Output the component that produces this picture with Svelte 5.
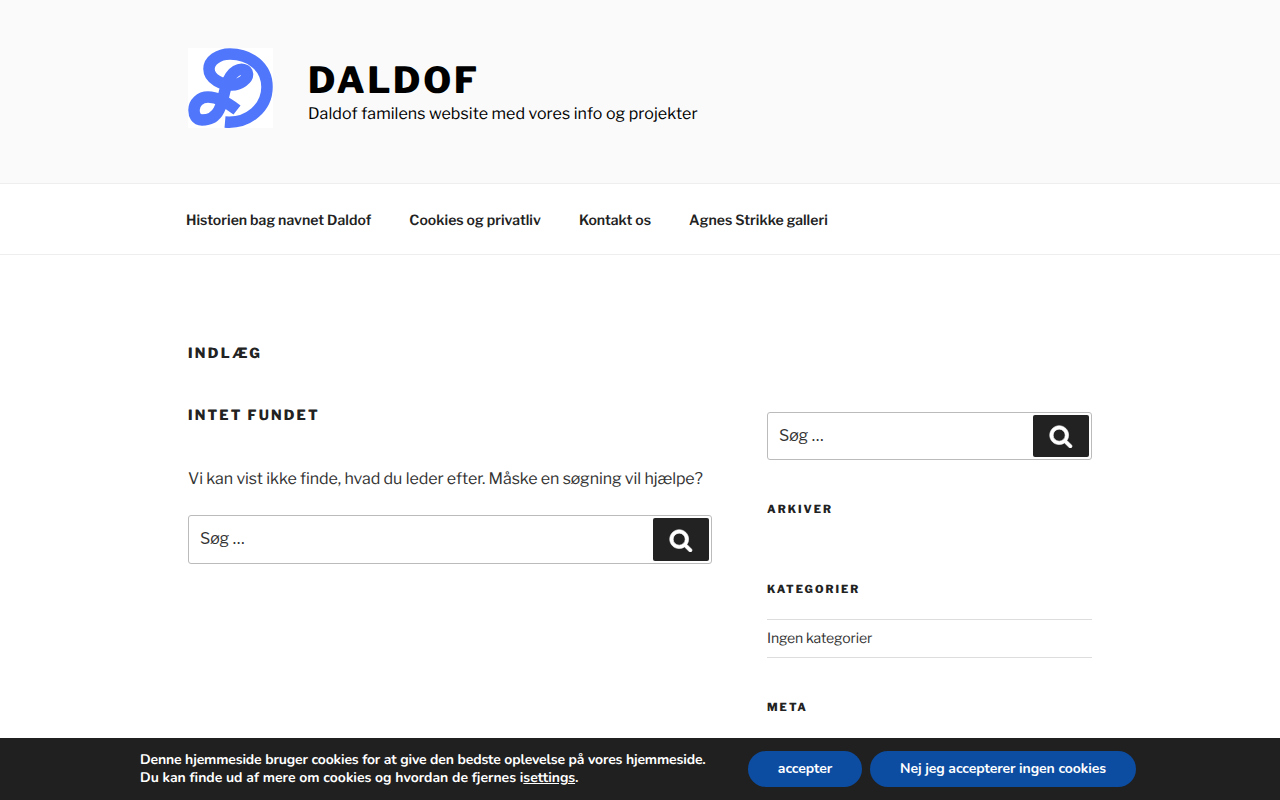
<script>
  const nav = ['Historien bag navnet Daldof', 'Cookies og privatliv', 'Kontakt os', 'Agnes Strikke galleri'];
</script>

{#snippet search()}
  <form class="search" onsubmit={(e) => e.preventDefault()}>
    <input type="search" placeholder="Søg …" />
    <button type="submit" aria-label="Søg">
      <svg viewBox="0 0 30 32" width="24" height="24" fill="#fff" stroke="#fff" stroke-width="0.8">
        <path d="M20.571 14.857q0-3.304-2.348-5.652t-5.652-2.348-5.652 2.348-2.348 5.652 2.348 5.652 5.652 2.348 5.652-2.348 2.348-5.652zM29.714 29.714q0 0.929-0.679 1.607t-1.607 0.679q-0.964 0-1.607-0.679l-6.125-6.107q-3.196 2.214-7.125 2.214-2.554 0-4.884-0.991t-4.018-2.679-2.679-4.018-0.991-4.884 0.991-4.884 2.679-4.018 4.018-2.679 4.884-0.991 4.884 0.991 4.018 2.679 2.679 4.018 0.991 4.884q0 3.929-2.214 7.125l6.125 6.125q0.661 0.661 0.661 1.607z" />
      </svg>
    </button>
  </form>
{/snippet}

<div class="page">
  <header class="masthead">
    <div class="wrap brand">
      <div class="logo">
        <svg viewBox="0 0 85 80" width="85" height="80" fill="none">
          <path d="M37 74 C61 76 79 59 79 39 C79 19 62 6 42 6 C30 6 21 13 21 21 C21 31 34 37 44 37 C52 37 60 31 59.5 26 C59 21 53 20 48 23 C43 26 40.5 31 38.5 37 C36 44 35 54 31 62 C27 70 20 72 14 72 C8 72 6 67 6 62 C6 55 12 49 20 49 C30 49 40 55 49 62" stroke="#5077fb" stroke-width="11.5" />
        </svg>
      </div>
      <div class="titles">
        <h1>DALDOF</h1>
        <p>Daldof familens website med vores info og projekter</p>
      </div>
    </div>
  </header>

  <nav class="mainnav">
    <ul class="wrap">
      {#each nav as item}
        <li><a href="#top">{item}</a></li>
      {/each}
    </ul>
  </nav>

  <main class="wrap content">
    <h2 class="page-title">INDLÆG</h2>
    <div class="columns">
      <section class="primary">
        <h3>INTET FUNDET</h3>
        <p>Vi kan vist ikke finde, hvad du leder efter. Måske en søgning vil hjælpe?</p>
        {@render search()}
      </section>
      <aside class="sidebar">
        {@render search()}
        <h4 class="first">ARKIVER</h4>
        <h4 class="cat">KATEGORIER</h4>
        <ul><li>Ingen kategorier</li></ul>
        <h4 class="meta">META</h4>
      </aside>
    </div>
  </main>

  <div class="cookie">
    <div class="msg"><span class="line1">Denne hjemmeside bruger cookies for at give den bedste oplevelse på vores hjemmeside.</span><br /><span class="line2">Du kan finde ud af mere om cookies og hvordan de fjernes i<a href="#top">settings</a>.</span></div>
    <div class="actions">
      <button class="accept">accepter</button>
      <button class="reject">Nej jeg accepterer ingen cookies</button>
    </div>
  </div>
</div>

<style>
  :global(body) { margin: 0; background: #fff; }
  .page {
    height: 800px;
    overflow: hidden;
    position: relative;
    font-family: "Libre Franklin", "Inter", "Liberation Sans", sans-serif;
    color: #222;
    text-rendering: geometricPrecision;
  }
  .wrap { width: 904px; margin: 0 auto; box-sizing: border-box; }
  .masthead { height: 184px; box-sizing: border-box; background: #fafafa; border-bottom: 1px solid #eee; }
  .brand { display: flex; padding-top: 48px; }
  .logo { width: 85px; height: 80px; background: #fff; }
  .logo svg { display: block; }
  .titles { margin-left: 35px; }
  h1 { margin: 10px 0 0; font-size: 36px; line-height: 44px; font-weight: 800; letter-spacing: 2.75px; color: #000; }
  .titles p { margin: 0; font-size: 16px; line-height: 24px; color: #000; letter-spacing: 0.06px; }
  .mainnav { height: 71px; box-sizing: border-box; border-bottom: 1px solid #eee; }
  .mainnav ul { display: flex; list-style: none; margin: 0 auto; padding: 0; gap: 38px; position: relative; left: -2px; }
  .mainnav a { display: block; padding-top: 1px; line-height: 71px; height: 70px; font-size: 14px; font-weight: 600; color: #222; text-decoration: none; letter-spacing: 0.02px; }
  .page-title { margin: 90px 0 0; font-size: 14px; line-height: 18px; font-weight: 800; letter-spacing: 2.3px; }
  .columns { display: flex; justify-content: space-between; margin-top: 44px; }
  .primary { width: 524px; }
  h3 { margin: 0; font-size: 14px; line-height: 18px; font-weight: 800; letter-spacing: 2.15px; }
  .primary p { margin: 42px 0 0; font-size: 16px; line-height: 24px; color: #333; letter-spacing: -0.07px; }
  .primary .search { margin-top: 24px; }
  .sidebar { width: 325px; padding-top: 5px; }
  .search { display: flex; align-items: center; justify-content: space-between; height: 49px; box-sizing: border-box; border: 1px solid #bbb; border-radius: 3px; padding: 2px; background: #fff; }
  .sidebar .search { height: 48px; }
  .search input { flex: 1; min-width: 0; border: 0; outline: 0; background: none; padding: 0 0 2px 9px; font: inherit; font-size: 16px; color: #333; }
  .search input::placeholder { color: #333; opacity: 1; }
  .search button { width: 56px; height: 43px; border: 0; border-radius: 2px; background: #222; display: flex; align-items: center; justify-content: center; padding: 0; }
  .sidebar .search button { height: 42px; }
  h4 { margin: 0; font-size: 11px; line-height: 14px; font-weight: 800; letter-spacing: 2px; color: #222; }
  h4.first { margin-top: 42px; }
  h4.cat { margin-top: 66px; }
  h4.meta { margin-top: 42px; }
  .sidebar ul { list-style: none; margin: 23px 0 0; padding: 0; border-top: 1px solid #ddd; }
  .sidebar li { font-size: 14px; line-height: 37px; border-bottom: 1px solid #ddd; color: #333; letter-spacing: -0.12px; }
  .cookie { position: absolute; left: 0; right: 0; bottom: 0; height: 62px; background: #202020; color: #fff; display: flex; align-items: center; padding-left: 140px; font-family: "Nunito", "Lato", "Noto Sans", sans-serif; font-weight: 700; font-size: 14px; line-height: 18px; }
  .msg { width: 608px; }
  .line1 { letter-spacing: -0.15px; }
  .line2 { letter-spacing: -0.02px; }
  .msg a { color: #fff; text-decoration: underline; }
  .actions { display: flex; gap: 8px; }
  .actions button { height: 36px; border: 0; border-radius: 18px; background: #0c4da2; color: #fff; font: inherit; font-size: 14px; padding: 0; letter-spacing: -0.08px; }
  .accept { width: 114px; }
  .reject { width: 266px; }
</style>
